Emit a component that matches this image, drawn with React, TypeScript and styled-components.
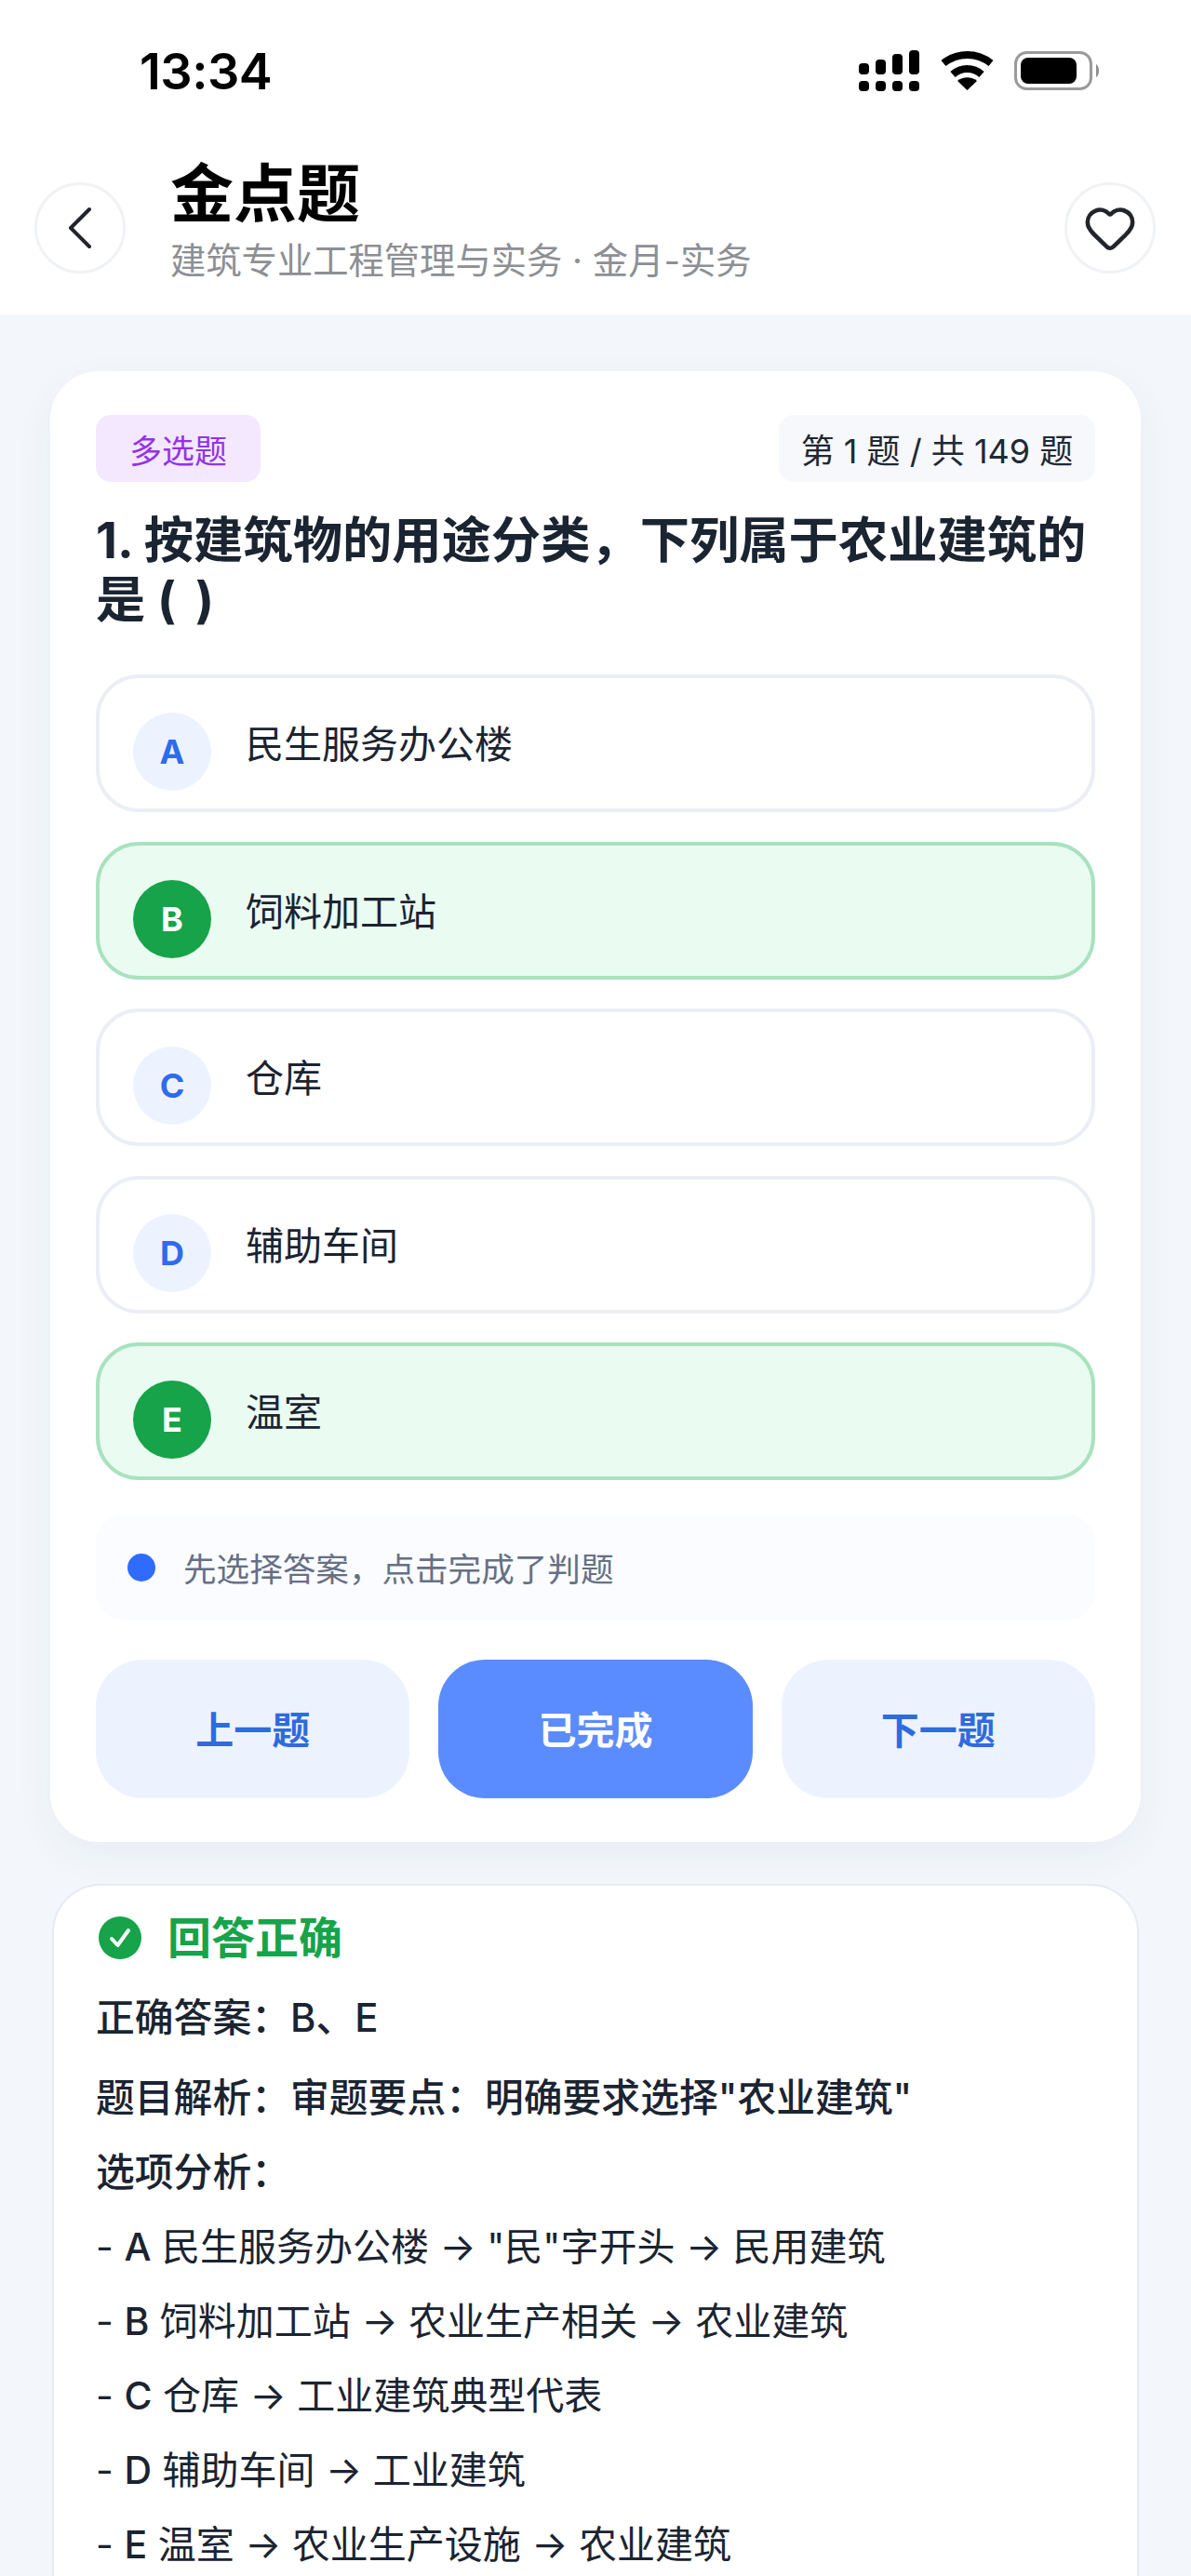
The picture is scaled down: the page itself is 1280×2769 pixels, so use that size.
import React from 'react';
import styled, { createGlobalStyle } from 'styled-components';
import { Heart } from 'lucide-react';

const GlobalStyle = createGlobalStyle`
  html, body {
    margin: 0;
    padding: 0;
    background: #f3f7fb;
    font-family: Inter, "Noto Sans CJK SC", sans-serif;
  }
  * {
    box-sizing: border-box;
  }
`;

const Page = styled.div`
  width: 1280px;
  height: 2769px;
  overflow: hidden;
  background: #f3f7fb;
`;

const Top = styled.div`
  background: #fff;
  height: 338px;
`;

const StatusBar = styled.div`
  height: 152px;
  padding: 0 97px 0 150px;
  display: flex;
  align-items: center;
  justify-content: space-between;
`;

const Time = styled.span`
  font-size: 54px;
  font-weight: 600;
  color: #000;
  letter-spacing: -0.5px;
`;

const StatusIcons = styled.div`
  display: flex;
  align-items: center;
  gap: 22px;
`;

const Header = styled.header`
  height: 186px;
  padding: 0 38px 0 37px;
  display: flex;
  align-items: center;
`;

const RoundButton = styled.button`
  width: 98px;
  height: 98px;
  flex: none;
  border-radius: 50%;
  border: 3px solid #f0f2f5;
  background: #fff;
  padding: 0;
  display: flex;
  align-items: center;
  justify-content: center;
  color: #22252b;
`;

const Titles = styled.div`
  flex: 1;
  margin-left: 48px;
  margin-top: -16px;
`;

const PageTitle = styled.h1`
  margin: 0 0 10px;
  font-size: 68px;
  line-height: 76px;
  font-weight: 700;
  color: #000;
`;

const PageSubtitle = styled.div`
  font-size: 38.3px;
  line-height: 48px;
  color: #8d8f94;
`;

const Main = styled.main`
  padding: 61px 54px 0;
`;

const QuizCard = styled.section`
  background: #fff;
  border-radius: 52px;
  padding: 47px 49px;
  box-shadow: 0 14px 44px rgba(40, 60, 110, 0.05);
`;

const MetaRow = styled.div`
  display: flex;
  justify-content: space-between;
`;

const TypeTag = styled.span`
  width: 177px;
  height: 72px;
  border-radius: 16px;
  background: #f3e8ff;
  color: #9333ea;
  font-size: 35px;
  display: flex;
  align-items: center;
  justify-content: center;
`;

const Counter = styled.span`
  width: 340px;
  height: 72px;
  border-radius: 16px;
  background: #f6f8fb;
  color: #1f2937;
  font-size: 36px;
  display: flex;
  align-items: center;
  justify-content: center;
`;

const Question = styled.h2`
  margin: 31px 0 48px;
  font-size: 53.3px;
  line-height: 64px;
  font-weight: 700;
  color: #1b2431;
`;

const OptionList = styled.div`
  display: flex;
  flex-direction: column;
  gap: 31.5px;
`;

const Option = styled.div<{ $selected?: boolean }>`
  height: 148px;
  padding: 0 36px;
  border-radius: 46px;
  border: 4px solid ${(p) => (p.$selected ? '#a8e2bf' : '#ebeff5')};
  background: ${(p) => (p.$selected ? '#eafbf1' : '#fff')};
  display: flex;
  align-items: center;
  gap: 37px;
`;

const OptionLetter = styled.span<{ $selected?: boolean }>`
  width: 84px;
  height: 84px;
  margin-top: 18px;
  flex: none;
  border-radius: 50%;
  background: ${(p) => (p.$selected ? '#16a34a' : '#edf3fe')};
  color: ${(p) => (p.$selected ? '#fff' : '#2f6bed')};
  font-size: 36px;
  font-weight: 700;
  display: flex;
  align-items: center;
  justify-content: center;
`;

const OptionText = styled.span`
  font-size: 41px;
  margin-bottom: 4px;
  color: #1b2431;
`;

const Hint = styled.div`
  height: 113px;
  margin-top: 37px;
  padding: 0 34px;
  border-radius: 30px;
  background: #fafcff;
  display: flex;
  align-items: center;
  gap: 30px;
  color: #667085;
  font-size: 35.6px;
`;

const HintDot = styled.span`
  width: 30px;
  height: 30px;
  flex: none;
  border-radius: 50%;
  background: #2f6bff;
`;

const Actions = styled.div`
  margin-top: 43px;
  display: grid;
  grid-template-columns: repeat(3, 1fr);
  gap: 31px;
`;

const ActionButton = styled.button<{ $primary?: boolean }>`
  height: 149px;
  padding-bottom: 4px;
  border: none;
  border-radius: 50px;
  background: ${(p) => (p.$primary ? '#5b8cff' : '#edf3fe')};
  color: ${(p) => (p.$primary ? '#fff' : '#2f6bdd')};
  font-family: inherit;
  font-size: 41px;
  font-weight: 700;
`;

const ResultCard = styled.section`
  margin: 45px 2px 0;
  min-height: 900px;
  background: #fff;
  border: 2px solid #e6ebf4;
  border-radius: 52px;
  padding: 31px 45px;
`;

const ResultHead = styled.div`
  display: flex;
  align-items: center;
  gap: 28px;
  margin: 0 0 21px 3px;
  color: #16a34a;
  font-size: 47px;
  line-height: 50px;
  font-weight: 700;
`;

const ResultLine = styled.div<{ $strong?: boolean; $gap?: boolean }>`
  font-size: ${(p) => (p.$strong ? '41.8px' : '41px')};
  line-height: 80px;
  color: #1b2431;
  font-weight: ${(p) => (p.$strong ? 500 : 400)};
  margin-bottom: ${(p) => (p.$gap ? '6px' : '0')};
`;

const LineLetter = styled.span`
  font-weight: 500;
`;

const options = [
  { letter: 'A', text: '民生服务办公楼' },
  { letter: 'B', text: '饲料加工站', selected: true },
  { letter: 'C', text: '仓库' },
  { letter: 'D', text: '辅助车间' },
  { letter: 'E', text: '温室', selected: true },
];

const analysis = [
  { letter: 'A', text: '民生服务办公楼 → "民"字开头 → 民用建筑' },
  { letter: 'B', text: '饲料加工站 → 农业生产相关 → 农业建筑' },
  { letter: 'C', text: '仓库 → 工业建筑典型代表' },
  { letter: 'D', text: '辅助车间 → 工业建筑' },
  { letter: 'E', text: '温室 → 农业生产设施 → 农业建筑' },
];

const SignalIcon = () => (
  <svg width="66" height="44" viewBox="0 0 66 44" fill="#000">
    <rect x="0" y="14" width="11" height="12" rx="4" />
    <rect x="18" y="10" width="11" height="16" rx="4" />
    <rect x="36" y="4" width="11" height="22" rx="4" />
    <rect x="54" y="0" width="11" height="26" rx="4" />
    <rect x="0" y="33" width="11" height="11" rx="4" />
    <rect x="18" y="33" width="11" height="11" rx="4" />
    <rect x="36" y="33" width="11" height="11" rx="4" />
    <rect x="54" y="33" width="11" height="11" rx="4" />
  </svg>
);

const WifiIcon = () => (
  <svg width="57" height="42" viewBox="0 0 57 42" fill="none" stroke="#000" strokeWidth="8">
    <path d="M3 13 C18 1 39 1 54 13" />
    <path d="M13 25 C22 17 35 17 44 25" />
    <path d="M28.5 42 L18 32 C24 27 33 27 39 32 Z" fill="#000" stroke="none" />
  </svg>
);

const BatteryIcon = () => (
  <svg width="93" height="42" viewBox="0 0 93 42">
    <rect x="1.5" y="1.5" width="81" height="39" rx="12" fill="#fff" stroke="#9a9a9a" strokeWidth="3" />
    <rect x="7" y="7" width="60" height="28" rx="8" fill="#000" />
    <path d="M88 14 C92 16 92 26 88 28 Z" fill="#8f8f8f" />
  </svg>
);

const BackIcon = () => (
  <svg width="26" height="46" viewBox="0 0 26 46" fill="none" stroke="#22252b" strokeWidth="4" strokeLinecap="round" strokeLinejoin="round">
    <path d="M23 3 L3 23 L23 43" />
  </svg>
);

const CheckIcon = () => (
  <svg width="46" height="46" viewBox="0 0 46 46">
    <circle cx="23" cy="23" r="23" fill="#16a34a" />
    <path d="M14 24 L20.5 31 L32 15" fill="none" stroke="#fff" strokeWidth="4" strokeLinecap="round" strokeLinejoin="round" />
  </svg>
);

const App = () => (
  <Page>
    <GlobalStyle />
    <Top>
      <StatusBar>
        <Time>13:34</Time>
        <StatusIcons>
          <SignalIcon />
          <WifiIcon />
          <BatteryIcon />
        </StatusIcons>
      </StatusBar>
      <Header>
        <RoundButton>
          <BackIcon />
        </RoundButton>
        <Titles>
          <PageTitle>金点题</PageTitle>
          <PageSubtitle>建筑专业工程管理与实务 · 金月-实务</PageSubtitle>
        </Titles>
        <RoundButton>
          <Heart size={58} strokeWidth={1.9} />
        </RoundButton>
      </Header>
    </Top>
    <Main>
      <QuizCard>
        <MetaRow>
          <TypeTag>多选题</TypeTag>
          <Counter>第 1 题 / 共 149 题</Counter>
        </MetaRow>
        <Question>1. 按建筑物的用途分类，下列属于农业建筑的是 (&nbsp;&thinsp;)</Question>
        <OptionList>
          {options.map((o) => (
            <Option key={o.letter} $selected={o.selected}>
              <OptionLetter $selected={o.selected}>{o.letter}</OptionLetter>
              <OptionText>{o.text}</OptionText>
            </Option>
          ))}
        </OptionList>
        <Hint>
          <HintDot />
          先选择答案，点击完成了判题
        </Hint>
        <Actions>
          <ActionButton>上一题</ActionButton>
          <ActionButton $primary>已完成</ActionButton>
          <ActionButton>下一题</ActionButton>
        </Actions>
      </QuizCard>
      <ResultCard>
        <ResultHead>
          <CheckIcon />
          回答正确
        </ResultHead>
        <ResultLine $strong $gap>正确答案：B、E</ResultLine>
        <ResultLine $strong>题目解析：审题要点：明确要求选择"农业建筑"</ResultLine>
        <ResultLine $strong>选项分析：</ResultLine>
        {analysis.map((line) => (
          <ResultLine key={line.letter}>
            - <LineLetter>{line.letter}</LineLetter> {line.text}
          </ResultLine>
        ))}
      </ResultCard>
    </Main>
  </Page>
);

export default App;
